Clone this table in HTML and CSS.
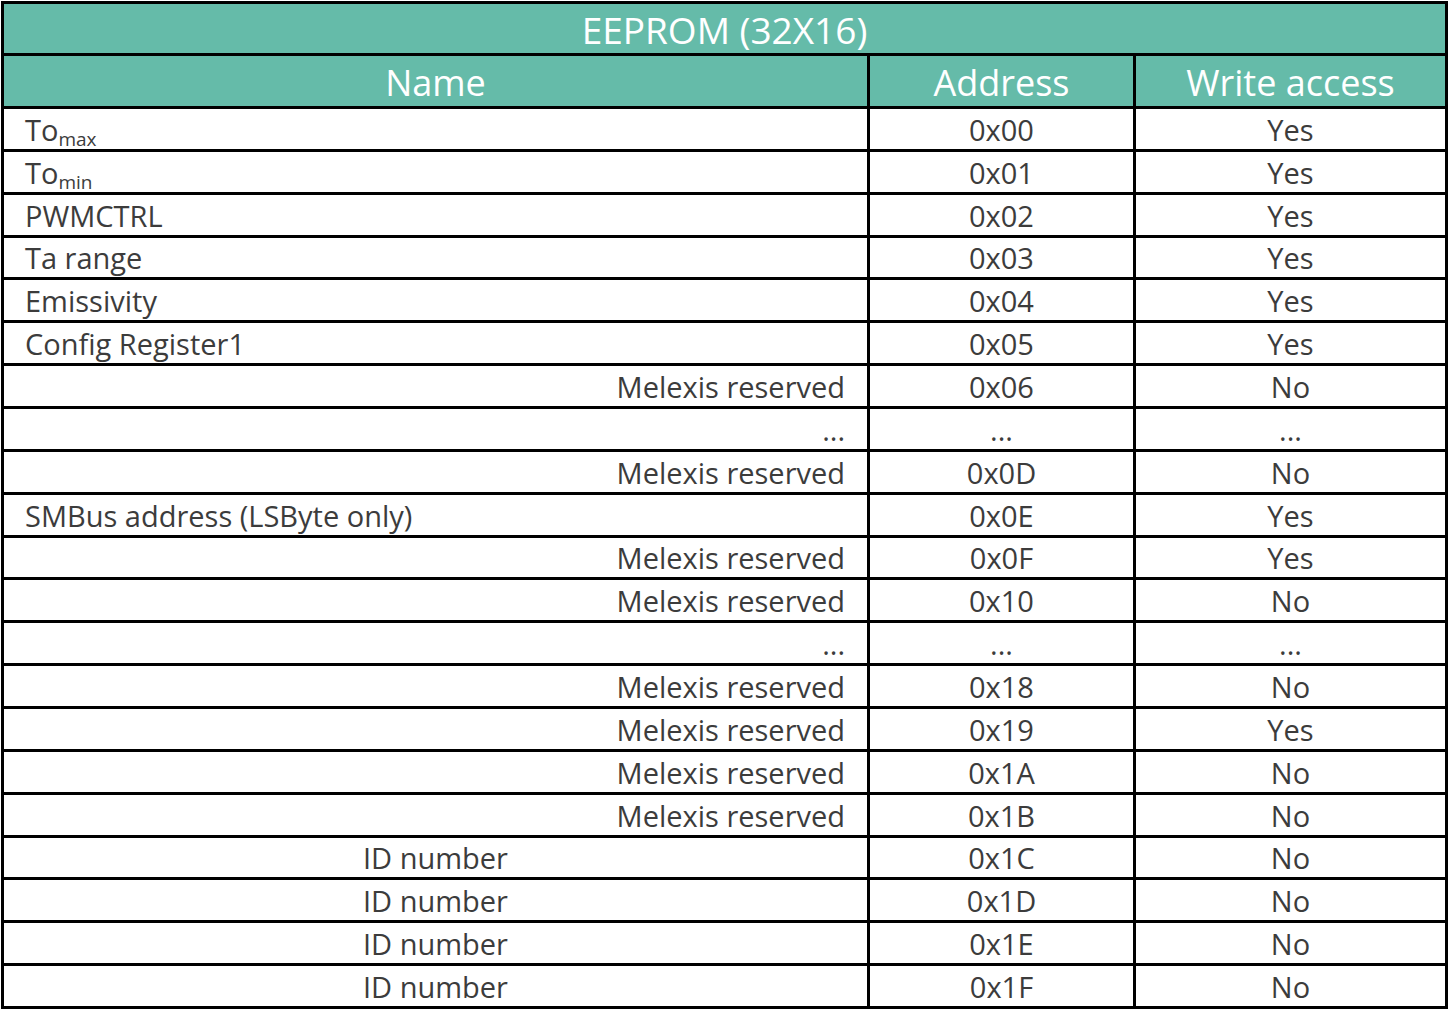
FILE: index.html
```html
<!DOCTYPE html>
<html>
<head>
<meta charset="utf-8">
<title>EEPROM (32X16)</title>
<link rel="stylesheet" href="styles.css">
</head>
<body>
<div class="table">
  <div class="cell title">EEPROM (32X16)</div>
  <div class="cell head">Name</div>
  <div class="cell head">Address</div>
  <div class="cell head">Write access</div>

  <div class="cell left"><span>To<sub>max</sub></span></div><div class="cell mid">0x00</div><div class="cell mid">Yes</div>
  <div class="cell left"><span>To<sub>min</sub></span></div><div class="cell mid">0x01</div><div class="cell mid">Yes</div>
  <div class="cell left">PWMCTRL</div><div class="cell mid">0x02</div><div class="cell mid">Yes</div>
  <div class="cell left">Ta range</div><div class="cell mid">0x03</div><div class="cell mid">Yes</div>
  <div class="cell left">Emissivity</div><div class="cell mid">0x04</div><div class="cell mid">Yes</div>
  <div class="cell left">Config Register1</div><div class="cell mid">0x05</div><div class="cell mid">Yes</div>
  <div class="cell right">Melexis reserved</div><div class="cell mid">0x06</div><div class="cell mid">No</div>
  <div class="cell right">...</div><div class="cell mid">...</div><div class="cell mid">...</div>
  <div class="cell right">Melexis reserved</div><div class="cell mid">0x0D</div><div class="cell mid">No</div>
  <div class="cell left">SMBus address (LSByte only)</div><div class="cell mid">0x0E</div><div class="cell mid">Yes</div>
  <div class="cell right">Melexis reserved</div><div class="cell mid">0x0F</div><div class="cell mid">Yes</div>
  <div class="cell right">Melexis reserved</div><div class="cell mid">0x10</div><div class="cell mid">No</div>
  <div class="cell right">...</div><div class="cell mid">...</div><div class="cell mid">...</div>
  <div class="cell right">Melexis reserved</div><div class="cell mid">0x18</div><div class="cell mid">No</div>
  <div class="cell right">Melexis reserved</div><div class="cell mid">0x19</div><div class="cell mid">Yes</div>
  <div class="cell right">Melexis reserved</div><div class="cell mid">0x1A</div><div class="cell mid">No</div>
  <div class="cell right">Melexis reserved</div><div class="cell mid">0x1B</div><div class="cell mid">No</div>
  <div class="cell mid">ID number</div><div class="cell mid">0x1C</div><div class="cell mid">No</div>
  <div class="cell mid">ID number</div><div class="cell mid">0x1D</div><div class="cell mid">No</div>
  <div class="cell mid">ID number</div><div class="cell mid">0x1E</div><div class="cell mid">No</div>
  <div class="cell mid">ID number</div><div class="cell mid">0x1F</div><div class="cell mid">No</div>
</div>
</body>
</html>
```

FILE: styles.css
```css
html, body {
  margin: 0;
  padding: 0;
  background: #ffffff;
}

body {
  font-family: "Open Sans", "DejaVu Sans", sans-serif;
  color: #3c3c3c;
}

.table {
  margin: 1px 0 0 1px;
  width: 1447px;
  height: 1008px;
  box-sizing: border-box;
  padding: 3px;
  background: #000000;
  display: grid;
  grid-template-columns: 863px 263px 309px;
  grid-template-rows: 49px 50px repeat(21, 1fr);
  gap: 3px;
}

.cell {
  background: #ffffff;
  display: flex;
  align-items: center;
  font-size: 29px;
  line-height: 1;
  white-space: nowrap;
  padding-top: 1px;
  box-sizing: border-box;
}

.title {
  grid-column: 1 / 4;
  background: #65bba9;
  color: #ffffff;
  justify-content: center;
  font-size: 37px;
  padding-top: 1px;
}

.head {
  background: #65bba9;
  color: #ffffff;
  justify-content: center;
  font-size: 36px;
  padding-top: 4px;
}

.left {
  justify-content: flex-start;
  padding-left: 21px;
}

.right {
  justify-content: flex-end;
  padding-right: 22px;
}

.mid {
  justify-content: center;
}

sub {
  font-size: 19px;
  vertical-align: -5px;
  line-height: 0;
}
```
